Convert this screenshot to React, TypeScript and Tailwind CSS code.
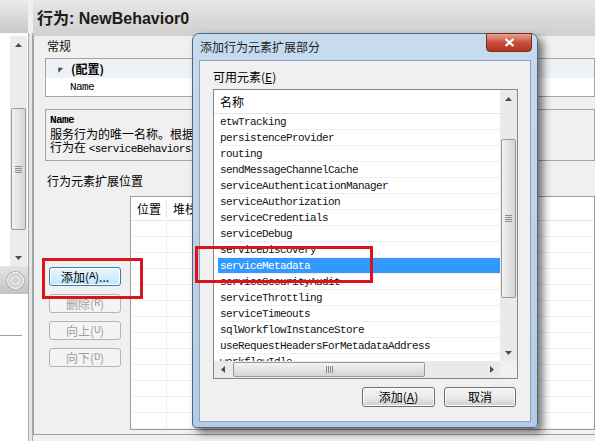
import React from "react";

const items = [
  "etwTracking",
  "persistenceProvider",
  "routing",
  "sendMessageChannelCache",
  "serviceAuthenticationManager",
  "serviceAuthorization",
  "serviceCredentials",
  "serviceDebug",
  "serviceDiscovery",
  "serviceMetadata",
  "serviceSecurityAudit",
  "serviceThrottling",
  "serviceTimeouts",
  "sqlWorkflowInstanceStore",
  "useRequestHeadersForMetadataAddress",
  "workflowIdle",
];

const mono = "font-['Liberation_Mono',monospace] text-[11px] tracking-[-0.6px]";

function Arrow({ dir, className = "" }: { dir: "up" | "down" | "left" | "right"; className?: string }) {
  const pts = {
    up: "0,4 3.5,0 7,4",
    down: "0,0 3.5,4 7,0",
    left: "4,0 0,3.5 4,7",
    right: "0,0 4,3.5 0,7",
  }[dir];
  const vb = dir === "up" || dir === "down" ? "0 0 7 4" : "0 0 4 7";
  const size = dir === "up" || dir === "down" ? { width: 7, height: 4 } : { width: 4, height: 7 };
  return (
    <svg viewBox={vb} {...size} className={className}>
      <polygon points={pts} fill="#4d4d4d" />
    </svg>
  );
}

function Grip({ vertical }: { vertical?: boolean }) {
  return (
    <div className={vertical ? "flex flex-col gap-[1px]" : "flex gap-[1px]"}>
      {[0, 1, 2, 3].map((i) => (
        <div
          key={i}
          className={vertical ? "h-[1px] w-[7px] bg-[#8a8a8a]" : "h-[7px] w-[1px] bg-[#8a8a8a]"}
        />
      ))}
    </div>
  );
}

function WinButton({
  children,
  disabled,
  focused,
  className = "",
}: {
  children: React.ReactNode;
  disabled?: boolean;
  focused?: boolean;
  className?: string;
}) {
  return (
    <div
      className={`flex items-center justify-center rounded-[3px] border ${
        disabled
          ? "border-[#b5b5b5] bg-[#f4f4f4] text-[#a0a0a0]"
          : focused
          ? "border-[#3c7fb1] bg-gradient-to-b from-[#eaf6fd] to-[#bee6fd] text-black shadow-[inset_0_0_0_1px_#ffffff]"
          : "border-[#707070] bg-gradient-to-b from-[#f2f2f2] via-[#ebebeb] to-[#cfcfcf] text-black shadow-[inset_0_0_0_1px_#fcfcfc]"
      } ${className}`}
    >
      {children}
    </div>
  );
}

function LeftPane() {
  return (
    <div className="flex w-[28px] flex-col">
      <div className="h-[33px] bg-gradient-to-b from-[#ececec] via-[#dadada] to-[#c8c8c8]" />
      <div className="flex h-[233px] justify-end bg-white pt-[3px]">
        <div className="mr-[1px] flex w-[17px] flex-col items-center bg-[#ececec]">
          <div className="flex h-[17px] items-center justify-center">
            <Arrow dir="up" />
          </div>
          <div className="mt-[55px] flex h-[122px] w-[15px] items-center justify-center rounded-[2px] border border-[#9a9a9a] bg-gradient-to-r from-[#f2f2f2] to-[#d6d6d6]">
            <Grip vertical />
          </div>
          <div className="mt-auto flex h-[17px] items-center justify-center">
            <Arrow dir="down" />
          </div>
        </div>
      </div>
      <div className="flex h-[28px] items-center bg-gradient-to-b from-[#e4e4e4] to-[#c2c2c2] pl-[7px]">
        <div className="flex size-[17px] items-center justify-center rounded-full border border-[#ffffff] bg-[#d2d2d2] shadow-[0_0_0_1px_#b0b0b0]">
          <div className="size-[9px] rounded-full border border-[#f4f4f4]" />
        </div>
      </div>
      <div className="flex-1 bg-white pt-[41px]">
        <div className="h-[1px] w-[22px] bg-[#a0a0a0]" />
      </div>
    </div>
  );
}

function Main() {
  return (
    <div className="flex min-w-0 flex-1 flex-col">
      <div className="flex h-[36px] items-center bg-gradient-to-b from-[#e8e8e8] via-[#d9d9d9] to-[#d0d0d0] pl-[4px]">
        <span className="font-['Liberation_Sans',sans-serif] text-[16px] font-bold leading-none text-[#1a1a1a]">
          <span className="font-['Noto_Sans_CJK_SC',sans-serif]">行为</span>: NewBehavior0
        </span>
      </div>
      <div className="flex h-[399px] flex-col border-b border-l border-[#9c9c9c] bg-[#f0f0f0] pl-[11px]">
        <div className="mt-[1px] h-[17px] pl-[2px] leading-[17px] text-[#111]">常规</div>
        <div className="mt-[4px] flex h-[40px] flex-col border border-[#a5a5a5] bg-white">
          <div className="flex h-[19px] items-center bg-[#eef2f7] pl-[10px]">
            <Arrow dir="up" className="rotate-[-45deg]" />
            <span className="ml-[8px] font-bold">(配置)</span>
          </div>
          <div className={`h-[18px] pl-[24px] leading-[18px] ${mono}`}>Name</div>
        </div>
        <div className="mt-[12px] h-[58px] overflow-hidden whitespace-nowrap border border-[#a5a5a5] bg-[#f0f0f0] pl-[4px] pt-[3px]">
          <div className={`${mono} font-bold leading-[14px]`}>Name</div>
          <div className="leading-[13px]">服务行为的唯一名称。根据此名称将服务行为和终结点行为映射到每个行为配置</div>
          <div className="leading-[13px]">
            行为在 <span className={mono}>&lt;serviceBehaviors&gt;</span> 元素中必须唯一。
          </div>
        </div>
        <div className="mt-[11px] h-[17px] pl-[2px] leading-[17px]">行为元素扩展位置</div>
        <div className="mt-[7px] flex flex-1">
          <div className="flex w-[85px] flex-col gap-[8px] pl-[4px] pt-[71px]">
            <WinButton focused className="h-[19px] w-[72px]">
              添加(<span className={mono}>A</span>)...
            </WinButton>
            <WinButton disabled className="h-[19px] w-[72px]">
              删除(<span className={mono}>R</span>)
            </WinButton>
            <WinButton disabled className="h-[19px] w-[72px]">
              向上(<span className={mono}>U</span>)
            </WinButton>
            <WinButton disabled className="h-[19px] w-[72px]">
              向下(<span className={mono}>D</span>)
            </WinButton>
          </div>
          <div className="mb-[4px] flex flex-1 flex-col border border-[#9c9c9c] bg-white">
            <div className="flex h-[24px] items-center border-b border-[#e4e4e4]">
              <div className="w-[36px] border-r border-[#e4e4e4] pl-[6px]">位置</div>
              <div className="pl-[6px]">堆栈</div>
            </div>
            {Array.from({ length: 13 }).map((_, i) => (
              <div key={i} className="flex h-[16px] border-b border-[#f0f0f0]">
                <div className="w-[36px] border-r border-[#f0f0f0]" />
                <div className="w-[84px] border-r border-[#f0f0f0]" />
              </div>
            ))}
          </div>
        </div>
      </div>
    </div>
  );
}

function ListBox() {
  return (
    <div className="grid h-[290px] w-[305px] grid-cols-[1fr_17px] grid-rows-[1fr_17px] border border-[#828790] bg-white">
      <div className="overflow-hidden">
        <div className="flex h-[24px] items-center border-b border-[#e5e5e5] pl-[6px] pt-[1px]">名称</div>
        {items.map((t) => (
          <div
            key={t}
            className={`ml-[4px] h-[16px] whitespace-nowrap border-b border-[#efefef] pl-[2px] leading-[16px] ${mono} ${
              t === "serviceMetadata" ? "border-[#3399ff] bg-[#3399ff] text-white" : "text-[#111]"
            }`}
          >
            {t}
          </div>
        ))}
      </div>
      <div className="flex flex-col items-center bg-[#eaeaea]">
        <div className="flex h-[17px] items-center justify-center">
          <Arrow dir="up" />
        </div>
        <div className="mt-[32px] flex h-[159px] w-[15px] items-center justify-center rounded-[2px] border border-[#9a9a9a] bg-gradient-to-r from-[#f4f4f4] to-[#d4d4d4]">
          <Grip vertical />
        </div>
        <div className="mt-auto flex h-[17px] items-center justify-center">
          <Arrow dir="down" />
        </div>
      </div>
      <div className="flex items-center bg-[#eaeaea]">
        <div className="flex w-[17px] items-center justify-center">
          <Arrow dir="left" />
        </div>
        <div className="ml-[2px] flex h-[15px] w-[192px] items-center justify-center rounded-[2px] border border-[#9a9a9a] bg-gradient-to-b from-[#f4f4f4] to-[#d4d4d4]">
          <Grip />
        </div>
        <div className="ml-auto flex w-[17px] items-center justify-center">
          <Arrow dir="right" />
        </div>
      </div>
      <div className="bg-[#f0f0f0]" />
    </div>
  );
}

function Dialog() {
  return (
    <div className="absolute left-[192px] top-[33px] flex h-[395px] w-[346px] flex-col rounded-t-[7px] rounded-b-[4px] border border-[#55657a] bg-gradient-to-b from-[#c7dbef] via-[#bcd2e9] to-[#b3cce6] shadow-[5px_5px_8px_rgba(0,0,0,0.55)]">
      <div className="relative flex h-[26px] items-center pl-[7px] text-[#1e1e1e]">
        添加行为元素扩展部分
        <div className="absolute right-[5px] top-[-1px] flex h-[19px] w-[46px] items-center justify-center rounded-b-[4px] border border-[#7a2a22] bg-gradient-to-b from-[#e8a394] via-[#c9503c] to-[#b4321e]">
          <svg viewBox="0 0 10 9" width="11" height="9">
            <path d="M1 1 L9 8 M9 1 L1 8" stroke="#ffffff" strokeWidth="2.2" />
          </svg>
        </div>
      </div>
      <div className="mx-[6px] mb-[5px] flex flex-1 flex-col border border-[#8ea3bb] bg-[#f0f0f0] pl-[13px] pr-[13px]">
        <div className="mt-[7px] h-[17px] leading-[17px]">
          可用元素(<span className="underline">E</span>)
        </div>
        <div className="mt-[4px]">
          <ListBox />
        </div>
        <div className="mt-[8px] flex justify-end gap-[9px] pr-[1px]">
          <WinButton className="h-[20px] w-[73px]">
            添加(<span className="underline">A</span>)
          </WinButton>
          <WinButton className="h-[20px] w-[72px]">取消</WinButton>
        </div>
      </div>
    </div>
  );
}

export default function App() {
  return (
    <div className="relative h-[441px] w-[595px] overflow-hidden bg-[#f0f0f0] font-['Noto_Sans_CJK_SC',sans-serif] text-[12px] text-black">
      <div className="flex h-full">
        <LeftPane />
        <div className="mt-[33px] w-[5px] border-x border-[#a8a8a8] bg-[#e6e6e6]" />
        <Main />
      </div>
      <Dialog />
      <div className="absolute left-[42px] top-[258px] h-[41px] w-[101px] border-[3px] border-[#d9141d]" />
      <div className="absolute left-[195px] top-[246px] h-[37px] w-[178px] border-[3px] border-[#d9141d]" />
    </div>
  );
}
